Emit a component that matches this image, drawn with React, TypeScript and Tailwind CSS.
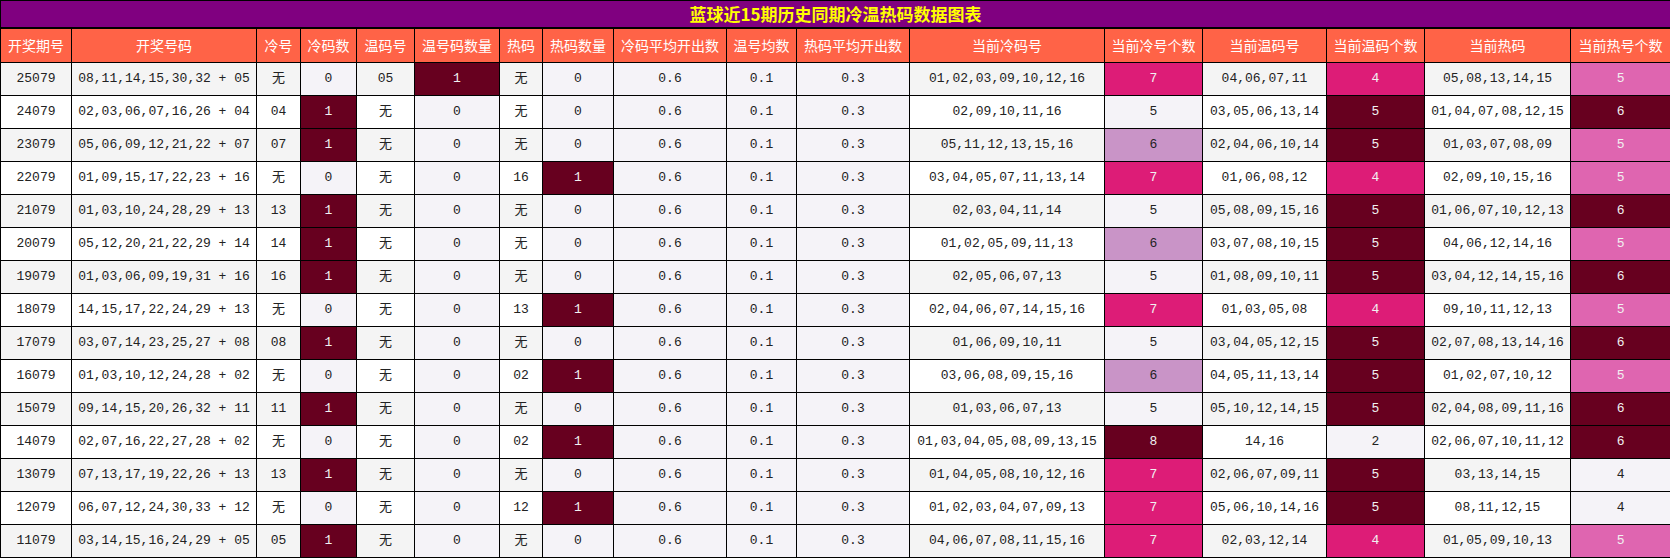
const headers = [
  "开奖期号",
  "开奖号码",
  "冷号",
  "冷码数",
  "温码号",
  "温号码数量",
  "热码",
  "热码数量",
  "冷码平均开出数",
  "温号均数",
  "热码平均开出数",
  "当前冷码号",
  "当前冷号个数",
  "当前温码号",
  "当前温码个数",
  "当前热码",
  "当前热号个数",
];

const widths = [71, 185, 44, 56, 58, 85, 43, 71, 113, 70, 113, 195, 98, 124, 98, 146, 100];

type Row = [string, string, string, number, string, number, string, number, string, number, string, number, string, number];

// 期号, 开奖号码, 冷号, 冷码数, 温码号, 温号码数量, 热码, 热码数量, 当前冷码号, 冷个数, 当前温码号, 温个数, 当前热码, 热个数
const rows: Row[] = [
  ["25079", "08,11,14,15,30,32 + 05", "无", 0, "05", 1, "无", 0, "01,02,03,09,10,12,16", 7, "04,06,07,11", 4, "05,08,13,14,15", 5],
  ["24079", "02,03,06,07,16,26 + 04", "04", 1, "无", 0, "无", 0, "02,09,10,11,16", 5, "03,05,06,13,14", 5, "01,04,07,08,12,15", 6],
  ["23079", "05,06,09,12,21,22 + 07", "07", 1, "无", 0, "无", 0, "05,11,12,13,15,16", 6, "02,04,06,10,14", 5, "01,03,07,08,09", 5],
  ["22079", "01,09,15,17,22,23 + 16", "无", 0, "无", 0, "16", 1, "03,04,05,07,11,13,14", 7, "01,06,08,12", 4, "02,09,10,15,16", 5],
  ["21079", "01,03,10,24,28,29 + 13", "13", 1, "无", 0, "无", 0, "02,03,04,11,14", 5, "05,08,09,15,16", 5, "01,06,07,10,12,13", 6],
  ["20079", "05,12,20,21,22,29 + 14", "14", 1, "无", 0, "无", 0, "01,02,05,09,11,13", 6, "03,07,08,10,15", 5, "04,06,12,14,16", 5],
  ["19079", "01,03,06,09,19,31 + 16", "16", 1, "无", 0, "无", 0, "02,05,06,07,13", 5, "01,08,09,10,11", 5, "03,04,12,14,15,16", 6],
  ["18079", "14,15,17,22,24,29 + 13", "无", 0, "无", 0, "13", 1, "02,04,06,07,14,15,16", 7, "01,03,05,08", 4, "09,10,11,12,13", 5],
  ["17079", "03,07,14,23,25,27 + 08", "08", 1, "无", 0, "无", 0, "01,06,09,10,11", 5, "03,04,05,12,15", 5, "02,07,08,13,14,16", 6],
  ["16079", "01,03,10,12,24,28 + 02", "无", 0, "无", 0, "02", 1, "03,06,08,09,15,16", 6, "04,05,11,13,14", 5, "01,02,07,10,12", 5],
  ["15079", "09,14,15,20,26,32 + 11", "11", 1, "无", 0, "无", 0, "01,03,06,07,13", 5, "05,10,12,14,15", 5, "02,04,08,09,11,16", 6],
  ["14079", "02,07,16,22,27,28 + 02", "无", 0, "无", 0, "02", 1, "01,03,04,05,08,09,13,15", 8, "14,16", 2, "02,06,07,10,11,12", 6],
  ["13079", "07,13,17,19,22,26 + 13", "13", 1, "无", 0, "无", 0, "01,04,05,08,10,12,16", 7, "02,06,07,09,11", 5, "03,13,14,15", 4],
  ["12079", "06,07,12,24,30,33 + 12", "无", 0, "无", 0, "12", 1, "01,02,03,04,07,09,13", 7, "05,06,10,14,16", 5, "08,11,12,15", 4],
  ["11079", "03,14,15,16,24,29 + 05", "05", 1, "无", 0, "无", 0, "04,06,07,08,11,15,16", 7, "02,03,12,14", 4, "01,05,09,10,13", 5],
];

const LIGHT = "bg-[#f5f3f8] text-[#222]";
const DARK = "bg-[#67001f] text-[#f1f1f1]";
const PINK = "bg-[#dd1c77] text-[#f1f1f1]";
const SOFT = "bg-[#df65b0] text-[#f1f1f1]";
const LILAC = "bg-[#c994c7] text-[#222]";

const binary = (v: number) => (v === 1 ? DARK : LIGHT);
const coldColor = (v: number) => (v === 8 ? DARK : v === 7 ? PINK : v === 6 ? LILAC : LIGHT);
const warmColor = (v: number) => (v === 5 ? DARK : v === 4 ? PINK : LIGHT);
const hotColor = (v: number) => (v === 6 ? DARK : v === 5 ? SOFT : LIGHT);

const Cell = ({ children, className }: { children: React.ReactNode; className: string }) => (
  <td className={`border border-black text-center align-middle p-0 whitespace-nowrap ${className}`}>{children}</td>
);

export default function App() {
  return (
    <div className="w-[1670px] bg-white">
      <table
        className="w-[1670px] table-fixed border-collapse text-[13px] text-[#222]"
        style={{ fontFamily: '"Liberation Mono", "Noto Sans CJK SC", monospace' }}
      >
        <colgroup>
          {widths.map((w, i) => (
            <col key={i} style={{ width: w }} />
          ))}
        </colgroup>
        <thead>
          <tr className="h-[27px]">
            <th
              colSpan={17}
              className="border border-b-2 border-black bg-[#800080] p-0 text-center text-[17px] font-bold text-[#ffff00] font-['Noto_Sans_CJK_SC',sans-serif]"
            >
              蓝球近15期历史同期冷温热码数据图表
            </th>
          </tr>
          <tr className="h-[35px]">
            {headers.map((h) => (
              <th
                key={h}
                className="border border-black bg-[#ff6347] p-0 text-center text-[14px] font-normal text-white whitespace-nowrap font-['Noto_Sans_CJK_SC',sans-serif]"
              >
                {h}
              </th>
            ))}
          </tr>
        </thead>
        <tbody>
          {rows.map((r, i) => {
            const base = i % 2 === 0 ? "bg-[#f4f4f4]" : "bg-white";
            return (
              <tr key={r[0]} className="h-[33px]">
                <Cell className={base}>{r[0]}</Cell>
                <Cell className={base}>{r[1]}</Cell>
                <Cell className={base}>{r[2]}</Cell>
                <Cell className={binary(r[3])}>{r[3]}</Cell>
                <Cell className={base}>{r[4]}</Cell>
                <Cell className={binary(r[5])}>{r[5]}</Cell>
                <Cell className={base}>{r[6]}</Cell>
                <Cell className={binary(r[7])}>{r[7]}</Cell>
                <Cell className={LIGHT}>0.6</Cell>
                <Cell className={LIGHT}>0.1</Cell>
                <Cell className={LIGHT}>0.3</Cell>
                <Cell className={base}>{r[8]}</Cell>
                <Cell className={coldColor(r[9])}>{r[9]}</Cell>
                <Cell className={base}>{r[10]}</Cell>
                <Cell className={warmColor(r[11])}>{r[11]}</Cell>
                <Cell className={base}>{r[12]}</Cell>
                <Cell className={hotColor(r[13])}>{r[13]}</Cell>
              </tr>
            );
          })}
        </tbody>
      </table>
    </div>
  );
}
